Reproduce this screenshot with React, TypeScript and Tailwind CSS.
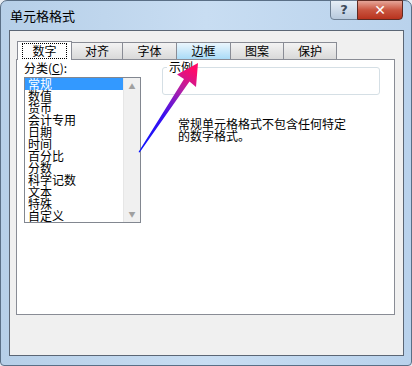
import React from 'react';

const cjk = { fontFamily: '"Noto Sans CJK SC", "Noto Sans", sans-serif' };

const tabs = ['数字', '对齐', '字体', '边框', '图案', '保护'];
const tabWidths = [55, 52, 55, 55, 54, 54];

const categories = ['常规', '数值', '货币', '会计专用', '日期', '时间', '百分比', '分数', '科学记数', '文本', '特殊', '自定义'];

const Tab = ({ label, index }: { label: string; index: number }) => {
  const w = tabWidths[index];
  if (index === 0) {
    return (
      <div
        className="h-[19px] -mb-px relative z-10 border border-b-0 border-[#898c95] bg-white flex items-center justify-center"
        style={{ width: w }}
      >
        <span className="border border-dotted border-black px-[9px] leading-[14px] text-[12px] text-black">{label}</span>
      </div>
    );
  }
  const hover = index === 3;
  return (
    <div
      className={`h-[17px] -ml-px border border-b-0 border-[#898c95] flex items-center justify-center text-[12px] text-black leading-none ${
        hover ? 'bg-gradient-to-b from-[#eaf6fd] to-[#a9dbf6]' : 'bg-gradient-to-b from-[#f3f3f3] to-[#d9d9d9]'
      }`}
      style={{ width: w }}
    >
      {label}
    </div>
  );
};

const Arrow = () => (
  <svg className="absolute left-0 top-0 pointer-events-none" width="412" height="366">
    <defs>
      <linearGradient id="ag" gradientUnits="userSpaceOnUse" x1="139" y1="152" x2="194" y2="70">
        <stop offset="0" stopColor="#0a14ff" />
        <stop offset="0.45" stopColor="#3a10f0" />
        <stop offset="0.75" stopColor="#b020a8" />
        <stop offset="1" stopColor="#ff0a6a" />
      </linearGradient>
    </defs>
    <polygon points="138.5,152 139.6,152.6 189.5,81.5 196,87 198,63 177,74.5 184,79" fill="url(#ag)" />
  </svg>
);

export default function App() {
  return (
    <div className="relative w-[412px] h-[366px] overflow-hidden bg-[#e8edf3]" style={cjk}>
      <div className="absolute inset-0 rounded-t-[7px] rounded-b-[4px] border border-[#5a6f86] bg-gradient-to-r from-[#b6cfe8] via-[#c8ddf2] to-[#b9d2ec] flex flex-col pl-[8px] pr-[7px] pb-[9px]">
        {/* title bar */}
        <div className="h-[29px] flex items-start justify-between">
          <span className="mt-[8px] ml-[1px] text-[13px] leading-[14px] text-black">单元格格式</span>
          <div className="flex -mt-px mr-[1px]">
            <div className="w-[28px] h-[20px] rounded-bl-[4px] border border-[#6d7f94] bg-gradient-to-b from-[#e6eef7] to-[#b7c9dd] flex items-center justify-center text-[13px] font-bold text-[#3d4a5a]" style={{ fontFamily: '"DejaVu Sans", sans-serif' }}>
              ?
            </div>
            <div className="w-[46px] h-[20px] -ml-px rounded-br-[4px] border border-[#5e2a22] bg-gradient-to-b from-[#e5a598] via-[#c9543f] to-[#b8321d] flex items-center justify-center text-[14px] font-bold text-white" style={{ fontFamily: '"DejaVu Sans", sans-serif' }}>
              ✕
            </div>
          </div>
        </div>

        {/* client area */}
        <div className="flex-1 border border-[#5b6675] bg-[#f0f0f0] flex flex-col pl-[6px] pr-[8px] pt-[10px] pb-[40px]">
          <div className="flex items-end pl-px">
            {tabs.map((t, i) => (
              <Tab key={t} label={t} index={i} />
            ))}
          </div>
          <div className="flex-1 border border-[#898c95] bg-white flex pl-[7px] pr-[14px] pt-[1px]">
            {/* left column */}
            <div className="w-[117px] flex flex-col">
              <div className="text-[12px] leading-[14px] text-black">分类(<span className="underline">C</span>):</div>
              <div className="mt-[2px] h-[146px] border border-[#828790] bg-white flex">
                <div className="flex-1 flex flex-col">
                  {categories.map((c, i) => (
                    <div
                      key={c}
                      className={`h-[12px] pl-[3px] text-[12px] leading-[12px] ${i === 0 ? 'bg-[#3399ff] text-white' : 'text-black'}`}
                    >
                      {c}
                    </div>
                  ))}
                </div>
                <div className="w-[17px] bg-[#f0f0f0] border-l border-[#e6e6e6] flex flex-col justify-between items-center py-[4px]">
                  <span className="text-[7px] leading-[8px] text-[#a0a0a0]">▲</span>
                  <span className="text-[7px] leading-[8px] text-[#a0a0a0]">▼</span>
                </div>
              </div>
            </div>

            {/* right column */}
            <div className="flex-1 ml-[21px] flex flex-col">
              <div className="relative mt-[6px] h-[28px] border border-[#d5dfe5] rounded-[3px]">
                <span className="absolute -top-[8px] left-[4px] bg-white px-[2px] text-[12px] leading-[14px] text-black">示例</span>
              </div>
              <div className="mt-[23px] ml-[16px] text-[12px] leading-[12px] text-black">
                常规单元格格式不包含任何特定
                <br />
                的数字格式。
              </div>
            </div>
          </div>
        </div>
      </div>
      <Arrow />
    </div>
  );
}
